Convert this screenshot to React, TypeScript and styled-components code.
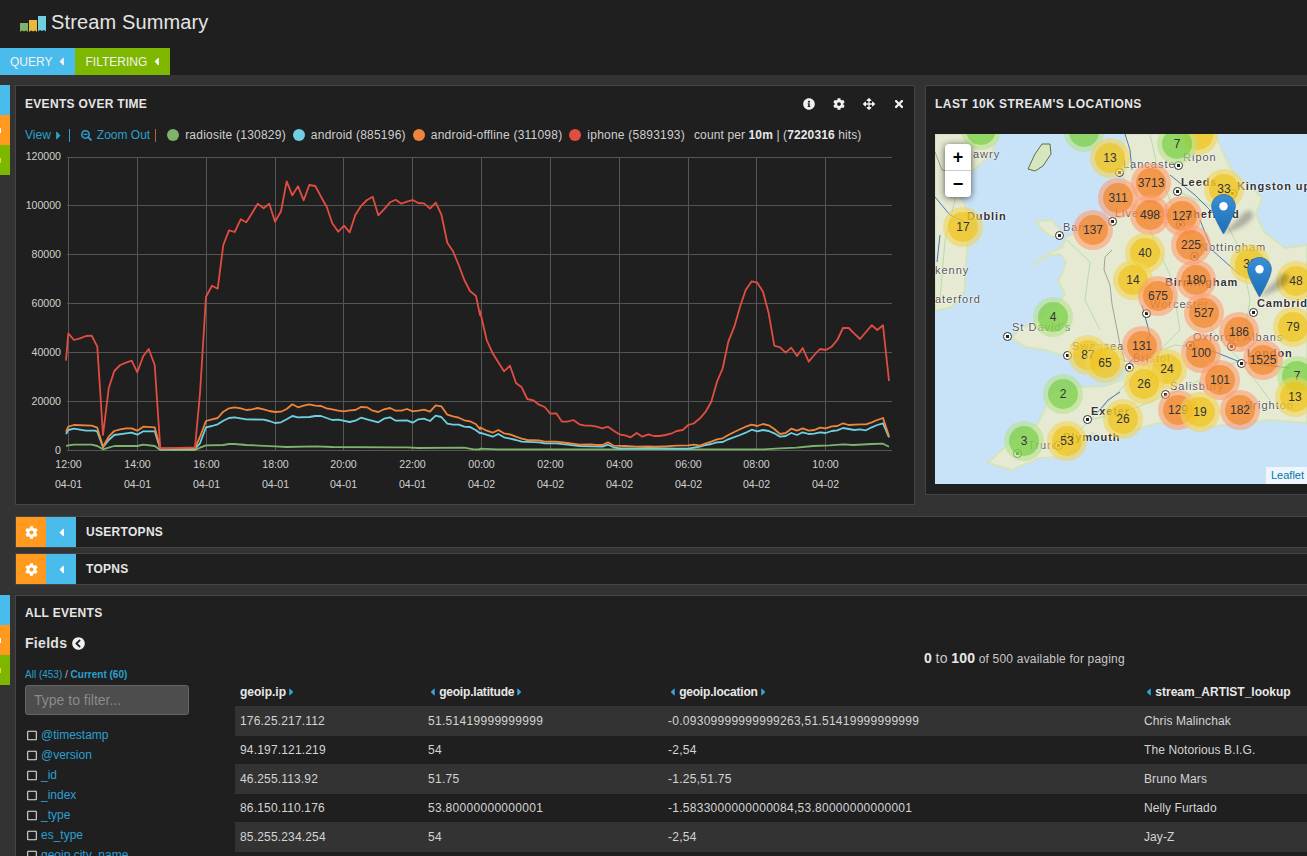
import styled, { createGlobalStyle } from "styled-components";
import {
  FaArrowsAlt,
  FaCaretLeft,
  FaCaretRight,
  FaChevronCircleLeft,
  FaCog,
  FaInfoCircle,
  FaRegSquare,
  FaSearchMinus,
  FaTimes,
} from "react-icons/fa";

export default function App() {
  return (
    <>
      <GlobalStyle />
      <Page>
        <TitleBar>
          <Logo />
          <Title>Stream Summary</Title>
        </TitleBar>
        <TabBar>
          <Tab $color={BLUE}>
            QUERY <FaCaretLeft />
          </Tab>
          <Tab $color={GREEN}>
            FILTERING <FaCaretLeft />
          </Tab>
        </TabBar>
        <Main>
          <Row>
            <RowTools />
            <ChartPanel>
              <PanelHeader>
                <PanelTitle>Events over time</PanelTitle>
                <PanelIcons>
                  <FaInfoCircle />
                  <FaCog />
                  <FaArrowsAlt />
                  <FaTimes />
                </PanelIcons>
              </PanelHeader>
              <Legend />
              <Chart />
            </ChartPanel>
            <MapPanel>
              <PanelHeader>
                <PanelTitle>Last 10k stream's locations</PanelTitle>
              </PanelHeader>
              <UkMap />
            </MapPanel>
          </Row>
          <CollapsedRow title="UserTopNs" />
          <CollapsedRow title="TopNs" />
          <EventsRow>
            <RowTools />
            <EventsPanel>
              <EventsHeader>
                <PanelTitle>All events</PanelTitle>
              </EventsHeader>
              <EventsBody>
                <FieldsColumn>
                  <FieldsTitle>
                    Fields <FaChevronCircleLeft />
                  </FieldsTitle>
                  <FieldCounts>
                    <a>All (453)</a> / <b>Current (60)</b>
                  </FieldCounts>
                  <FilterInput placeholder="Type to filter..." readOnly />
                  <FieldList>
                    {fields.map((name) => (
                      <FieldItem key={name}>
                        <FaRegSquare />
                        {name}
                      </FieldItem>
                    ))}
                  </FieldList>
                </FieldsColumn>
                <TableColumn>
                  <Paging>
                    <strong>0</strong> <Big>to</Big> <strong>100</strong> of 500
                    available for paging
                  </Paging>
                  <EventsTable>
                    <colgroup>
                      <col width={188} />
                      <col width={240} />
                      <col width={476} />
                      <col />
                    </colgroup>
                    <thead>
                      <tr>
                        <th>
                          geoip.ip <FaCaretRight />
                        </th>
                        <th>
                          <FaCaretLeft /> geoip.latitude <FaCaretRight />
                        </th>
                        <th>
                          <FaCaretLeft /> geoip.location <FaCaretRight />
                        </th>
                        <th>
                          <FaCaretLeft /> stream_ARTIST_lookup
                        </th>
                      </tr>
                    </thead>
                    <tbody>
                      {events.map((row) => (
                        <tr key={row[0]}>
                          {row.map((cell, i) => (
                            <td key={i}>{cell}</td>
                          ))}
                        </tr>
                      ))}
                    </tbody>
                  </EventsTable>
                </TableColumn>
              </EventsBody>
            </EventsPanel>
          </EventsRow>
        </Main>
      </Page>
    </>
  );
}

function Logo() {
  return (
    <LogoSvg viewBox="0 0 26 16">
      <path d="M0 7h8v9l-2-1.500-2 1-2-1-2 1.500z" fill="#7eb26d" />
      <path d="M9 4h8v12l-2-1.500-2 1-2-1-2 1.500z" fill="#eab839" />
      <path d="M18 0h8v15.500l-2-1.500-2 1-2-1-2 1.500z" fill="#6ed0e0" />
    </LogoSvg>
  );
}

function Legend() {
  return (
    <LegendRow>
      <LegendLink>
        View <ViewCaret />
      </LegendLink>
      <LegendBar $color="#2b9fd0" $before={8} />
      <LegendLink>
        <FaSearchMinus /> Zoom Out
      </LegendLink>
      <LegendBar $color="#b5623a" $before={5} />
      {legend.map((item) => (
        <LegendItem key={item.label}>
          <LegendDot $color={item.color} />
          {item.label}
        </LegendItem>
      ))}
      <LegendCount>
        count per <b>10m</b> | (<b>7220316</b> hits)
      </LegendCount>
    </LegendRow>
  );
}

function Chart() {
  return (
    <ChartSvg viewBox="15 147 900 348">
      {gridY.map((y) => (
        <line key={y} x1={67} x2={892} y1={y + 0.5} y2={y + 0.5} stroke="#555" />
      ))}
      {gridX.map((x) => (
        <line key={x} x1={x + 0.5} x2={x + 0.5} y1={157} y2={450} stroke="#555" />
      ))}
      {traces.map((trace) => (
        <polyline
          key={trace.color}
          points={toPoints(trace.left, trace.right)}
          fill="none"
          stroke={trace.color}
          strokeWidth={1.8}
          strokeLinejoin="round"
        />
      ))}
      {gridY.map((y, i) => (
        <TickText key={y} x={61} y={(i === 0 ? 156 : y) + 4} textAnchor="end">
          {(120000 - i * 20000).toString()}
        </TickText>
      ))}
      {gridX.map((x, i) => (
        <g key={x}>
          <TickText x={x + 0.5} y={468} textAnchor="middle">
            {ticks[i]}
          </TickText>
          <TickText x={x + 0.5} y={488} textAnchor="middle">
            {i < 6 ? "04-01" : "04-02"}
          </TickText>
        </g>
      ))}
    </ChartSvg>
  );
}

function UkMap() {
  return (
    <MapBox>
      <MapSvg viewBox="935 134 372 350">
        <g fill="#e6ead2" stroke="#d4e4c0" strokeWidth={2} strokeLinejoin="round">
          <polygon points="935,134 998,134 992,154 972,171 955,191 965,204 968,217 968,244 965,274 965,291 952,307 935,311" />
          <polygon points="1037,221 1052,220 1060,230 1058,238 1050,236 1040,228" />
          <polygon points="1125,134 1215,134 1222,150 1234,175 1250,186 1262,198 1256,214 1264,232 1285,248 1307,245 1307,423 1270,420 1240,423 1200,428 1158,423 1128,432 1112,440 1092,433 1078,446 1065,457 1040,458 1012,470 988,463 1005,447 1020,436 1038,423 1052,393 1082,387 1105,386 1122,380 1128,367 1110,360 1090,355 1068,357 1045,350 1025,347 1012,338 1020,328 1035,323 1048,312 1058,304 1065,294 1058,281 1062,274 1066,262 1060,254 1048,256 1032,265 1048,254 1062,247 1067,236 1090,230 1108,226 1118,205 1125,185 1122,165" />
        </g>
        <polygon
          points="1028,169 1035,154 1042,144 1050,144 1051,154 1043,166 1035,171"
          fill="#d8e6c0"
          stroke="#56724a"
        />
        <g fill="none" stroke="#b6dcae" strokeWidth={1}>
          <polyline points="1150,134 1158,170 1172,205 1190,240 1200,290 1212,330 1240,360" />
          <polyline points="1128,200 1150,230 1172,280 1180,330 1140,370 1100,410 1070,440" />
          <polyline points="1240,360 1270,400" />
          <polyline points="1240,360 1180,390 1130,410 1090,420" />
          <polyline points="1175,190 1220,210 1240,250 1250,300 1242,350" />
          <polyline points="1070,345 1130,362 1175,345 1215,350" />
          <polyline points="1067,240 1090,262 1085,300 1100,330" />
          <polyline points="960,180 945,240 940,300" />
        </g>
        <g fill="none" stroke="#4d78bb" strokeWidth={1}>
          <polyline points="1125,134 1130,150 1132,170" />
          <polyline points="1170,175 1195,195 1215,215 1225,225" />
          <polyline points="1142,305 1150,335 1128,365" />
          <polyline points="1120,392 1108,400 1098,412" />
          <polyline points="1185,345 1215,352 1240,362 1290,368" />
          <polyline points="935,197 950,215 965,222" />
          <polyline points="940,235 937,262" />
          <polyline points="1200,220 1212,250 1240,275" />
        </g>
        <g fill="none" stroke="#8f8f80" strokeWidth={0.8}>
          <polyline points="1112,250 1105,257 1104,270 1110,285 1112,304 1120,345 1125,362" />
          <polyline points="935,152 942,170 960,172" />
        </g>
      </MapSvg>

      {mapLabels.map((label) => (
        <MapLabel key={label.text} $x={label.x} $y={label.y} $bold={label.bold}>
          {label.text}
        </MapLabel>
      ))}
      {cityDots.map(([x, y]) => (
        <CityDot key={`${x}-${y}`} $x={x} $y={y} />
      ))}
      {clusters.map(([x, y, kind, count]) => (
        <Cluster key={`${x}-${y}`} $x={x} $y={y} $kind={kind}>
          <ClusterCore $kind={kind}>{count}</ClusterCore>
        </Cluster>
      ))}

      <MapPin x={1223} y={194} />
      <MapPin x={1259} y={257} />

      <ZoomControl>
        <ZoomButton>+</ZoomButton>
        <ZoomButton>−</ZoomButton>
      </ZoomControl>
      <Attribution>Leaflet</Attribution>
    </MapBox>
  );
}

function MapPin({ x, y }: { x: number; y: number }) {
  return (
    <PinSvg $x={x} $y={y} viewBox="0 0 45 41">
      <defs>
        <linearGradient id="pin-blue" x1="0" y1="0" x2="0" y2="1">
          <stop offset="0" stopColor="#3a8fd6" />
          <stop offset="1" stopColor="#1d6fb8" />
        </linearGradient>
      </defs>
      <PinShadow d="M12 40 L34 18 Q42 14 42 22 Q38 32 12 40z" />
      <path
        d="M12.500 0.500C6 0.500 0.700 5.800 0.700 12.300 0.700 20 12.500 40 12.500 40S24.300 20 24.300 12.300C24.300 5.800 19 0.500 12.500 0.500z"
        fill="url(#pin-blue)"
        stroke="#2a6ea8"
        strokeWidth={0.8}
      />
      <circle cx={12.5} cy={12.3} r={4.2} fill="#fff" />
    </PinSvg>
  );
}

function CollapsedRow({ title }: { title: string }) {
  return (
    <CollapsedPanel>
      <CollapsedButton $color={ORANGE}>
        <FaCog />
      </CollapsedButton>
      <CollapsedButton $color={BLUE}>
        <FaCaretLeft />
      </CollapsedButton>
      <CollapsedTitle>{title}</CollapsedTitle>
    </CollapsedPanel>
  );
}

function RowTools() {
  return (
    <ToolStrip>
      <ToolChip $color={BLUE} />
      <ToolChip $color={ORANGE} $mark="#fff" />
      <ToolChip $color={GREEN} $mark="#e8d24a" />
    </ToolStrip>
  );
}

const BLUE = "#4abcec";
const ORANGE = "#ff9a1e";
const GREEN = "#7eb700";
const PANEL = "#1f1f1f";
const BAND = "#333333";
const EDGE = "#454545";
const FONT = `"Liberation Sans", Arial, sans-serif`;

const GlobalStyle = createGlobalStyle`
  html, body {
    margin: 0;
    height: 100%;
    overflow: hidden;
    background: ${BAND};
    font-family: ${FONT};
    font-size: 12px;
    color: #c8c8c8;
  }
`;

const Page = styled.div`
  height: 856px;
  overflow: hidden;
`;

const TitleBar = styled.header`
  display: flex;
  align-items: center;
  height: 48px;
  padding: 0 0 4px 20px;
  box-sizing: border-box;
  background: ${PANEL};
`;

const LogoSvg = styled.svg`
  width: 26px;
  height: 16px;
  margin-top: 3px;
`;

const Title = styled.h1`
  margin: 0 0 0 5px;
  font-size: 20px;
  font-weight: 400;
  letter-spacing: 0.13px;
  color: #e4e4e4;
`;

const TabBar = styled.nav`
  display: flex;
  height: 27px;
  background: ${PANEL};
`;

const Tab = styled.div<{ $color: string }>`
  display: flex;
  align-items: center;
  gap: 7px;
  padding: 0 11px 0 10px;
  background: ${(p) => p.$color};
  color: #f2f2f2;
  font-size: 12px;

  svg {
    width: 5px;
    height: 13px;
  }
`;

const Main = styled.main`
  padding: 10px 0 0;
  background: ${BAND};
`;

const Row = styled.div`
  display: flex;
  align-items: flex-start;
  height: 421px;
`;

const EventsRow = styled(Row)`
  height: auto;
  margin-top: 10px;
`;

const ToolStrip = styled.div`
  flex: none;
  width: 10px;
  margin-right: 5px;
`;

const ToolChip = styled.div<{ $color: string; $mark?: string }>`
  position: relative;
  height: 30px;
  background: ${(p) => p.$color};

  &::after {
    content: "";
    display: ${(p) => (p.$mark ? "block" : "none")};
    position: absolute;
    left: 0;
    top: 13px;
    width: 1px;
    height: 5px;
    background: ${(p) => p.$mark};
  }
`;

const Panel = styled.section`
  box-sizing: border-box;
  background: ${PANEL};
  border: 1px solid ${EDGE};
`;

const ChartPanel = styled(Panel)`
  flex: none;
  width: 900px;
  height: 420px;
`;

const PanelTitle = styled.h2`
  margin: 0;
  font-size: 12px;
  font-weight: 700;
  text-transform: uppercase;
  color: #e6e6e6;
  letter-spacing: 0.3px;
`;

const MapPanel = styled(Panel)`
  flex: 1;
  height: 410px;
  margin: 0 -1px 0 10px;

  ${PanelTitle} {
    letter-spacing: 0.45px;
  }
`;

const EventsPanel = styled(Panel)`
  flex: 1;
  margin-right: -1px;
  height: 300px;
`;

const PanelHeader = styled.div`
  display: flex;
  align-items: center;
  justify-content: space-between;
  height: 36px;
  padding: 0 9px;
`;

const EventsHeader = styled(PanelHeader)`
  height: 33px;
`;

const PanelIcons = styled.div`
  display: flex;
  gap: 18px;
  color: #f0f0f0;

  svg {
    width: 12px;
    height: 12px;
  }
`;

const LegendRow = styled.div`
  display: flex;
  align-items: center;
  height: 16px;
  margin-top: 5px;
  padding-left: 9px;
  white-space: nowrap;
`;

const LegendLink = styled.span`
  display: flex;
  align-items: center;
  gap: 5px;
  color: #2b9fd0;

  svg {
    width: 11px;
    height: 11px;
  }
`;

const ViewCaret = styled(FaCaretRight)`
  && {
    width: 5px;
    height: 13px;
  }
`;

const LegendBar = styled.span<{ $color: string; $before: number }>`
  width: 1px;
  height: 13px;
  margin: 0 11px 0 ${(p) => p.$before}px;
  background: ${(p) => p.$color};
`;

const LegendItem = styled.span`
  display: flex;
  align-items: center;
  gap: 6px;
  margin-right: 7px;
  letter-spacing: 0.22px;
  color: #cfcfcf;
`;

const LegendDot = styled.i<{ $color: string }>`
  width: 12px;
  height: 12px;
  border-radius: 50%;
  background: ${(p) => p.$color};
`;

const LegendCount = styled.span`
  margin-left: 2px;
  letter-spacing: 0.12px;
  color: #cfcfcf;

  b {
    color: #e8e8e8;
  }
`;

const ChartSvg = styled.svg`
  display: block;
  width: 900px;
  height: 348px;
  margin: 4px 0 0 -1px;
`;

const TickText = styled.text`
  font-family: ${FONT};
  font-size: 10.6px;
  fill: #d0d0d0;
`;

const MapBox = styled.div`
  position: relative;
  height: 350px;
  margin: 12px 0 0 9px;
  overflow: hidden;
  background: #c8e2f8;
`;

const MapSvg = styled.svg`
  position: absolute;
  inset: 0;
  width: 372px;
  height: 350px;
`;

type AtPoint = { $x: number; $y: number };

const MapLabel = styled.span.attrs<AtPoint & { $bold?: boolean }>((p) => ({
  style: { left: p.$x - 935, top: p.$y - 134 - 7 },
}))<AtPoint & { $bold?: boolean }>`
  position: absolute;
  font-size: 11px;
  line-height: 14px;
  letter-spacing: ${(p) => (p.$bold ? 0.9 : 1)}px;
  font-weight: ${(p) => (p.$bold ? 700 : 400)};
  color: ${(p) => (p.$bold ? "#333" : "#555")};
  text-shadow: 0 0 2px #fff, 0 0 2px #fff;
  white-space: nowrap;
`;

const CityDot = styled.i.attrs<AtPoint>((p) => ({
  style: { left: p.$x - 935 - 4, top: p.$y - 134 - 4 },
}))<AtPoint>`
  position: absolute;
  box-sizing: border-box;
  width: 9px;
  height: 9px;
  border-radius: 50%;
  background: radial-gradient(circle, #222 0 1.5px, #fff 2px);
  border: 1px solid #333;
`;

type ClusterKind = "small" | "medium" | "large";

const haloColors: Record<ClusterKind, string> = {
  small: "rgba(181, 226, 140, 0.6)",
  medium: "rgba(241, 211, 87, 0.6)",
  large: "rgba(253, 156, 115, 0.6)",
};

const coreColors: Record<ClusterKind, string> = {
  small: "rgba(110, 204, 57, 0.6)",
  medium: "rgba(240, 194, 12, 0.6)",
  large: "rgba(241, 128, 23, 0.6)",
};

const Cluster = styled.div.attrs<AtPoint & { $kind: ClusterKind }>((p) => ({
  style: { left: p.$x - 935 - 20, top: p.$y - 134 - 20 },
}))<AtPoint & { $kind: ClusterKind }>`
  position: absolute;
  width: 40px;
  height: 40px;
  border-radius: 50%;
  background: ${(p) => haloColors[p.$kind]};
`;

const ClusterCore = styled.div<{ $kind: ClusterKind }>`
  width: 30px;
  height: 30px;
  margin: 5px;
  position: absolute;
  border-radius: 50%;
  background: ${(p) => coreColors[p.$kind]};
  color: #333;
  font-size: 12px;
  line-height: 30px;
  text-align: center;
`;

const PinSvg = styled.svg.attrs<AtPoint>((p) => ({
  style: { left: p.$x - 935 - 12.5, top: p.$y - 134 },
}))<AtPoint>`
  position: absolute;
  width: 45px;
  height: 41px;
`;

const PinShadow = styled.path`
  fill: rgba(0, 0, 0, 0.25);
  filter: blur(2px);
`;

const ZoomControl = styled.div`
  position: absolute;
  left: 10px;
  top: 10px;
  width: 26px;
  border-radius: 4px;
  background: #fff;
  box-shadow: 0 1px 7px rgba(0, 0, 0, 0.65);
`;

const ZoomButton = styled.div`
  height: 26px;
  color: #000;
  font: 700 18px/26px "Liberation Sans", Arial, sans-serif;
  text-align: center;

  & + & {
    border-top: 1px solid #ccc;
  }
`;

const Attribution = styled.a`
  position: absolute;
  right: 0;
  bottom: 0;
  padding: 2px 5px;
  width: 31px;
  background: rgba(255, 255, 255, 0.7);
  color: #0078a8;
  font-size: 11px;
  line-height: 13px;
`;

const CollapsedPanel = styled(Panel)`
  display: flex;
  align-items: stretch;
  height: 32px;
  margin: 0 -1px 5px 15px;

  &:first-of-type {
    margin-top: 10px;
  }
`;

const CollapsedButton = styled.div<{ $color: string }>`
  display: flex;
  align-items: center;
  justify-content: center;
  width: 30px;
  background: ${(p) => p.$color};
  color: #fff;

  svg {
    height: 13px;
    width: 13px;
  }
`;

const CollapsedTitle = styled.h3`
  align-self: center;
  margin: 0 0 0 10px;
  font-size: 12px;
  font-weight: 700;
  text-transform: uppercase;
  color: #e6e6e6;
  letter-spacing: 0.3px;
`;

const EventsBody = styled.div`
  display: flex;
`;

const FieldsColumn = styled.div`
  flex: none;
  width: 210px;
  padding: 0 0 0 9px;
`;

const FieldsTitle = styled.div`
  display: flex;
  align-items: center;
  gap: 5px;
  height: 20px;
  margin-top: 4px;
  font-size: 14px;
  font-weight: 700;
  letter-spacing: 0.3px;
  color: #e0e0e0;

  svg {
    width: 13px;
    height: 13px;
    color: #f0f0f0;
  }
`;

const FieldCounts = styled.div`
  margin-top: 16px;
  font-size: 10px;
  line-height: 12px;
  color: #bbb;

  a,
  b {
    color: #2b9fd0;
  }
`;

const FilterInput = styled.input`
  display: block;
  box-sizing: border-box;
  width: 164px;
  height: 30px;
  margin: 4px 0 0;
  padding: 0 8px;
  background: #4d4d4d;
  border: 1px solid #666;
  border-radius: 3px;
  font: 14px ${FONT};
  color: #ccc;

  &::placeholder {
    color: #8a8a8a;
  }
`;

const FieldList = styled.ul`
  margin: 10px 0 0;
  padding: 0 0 0 2px;
  list-style: none;
`;

const FieldItem = styled.li`
  display: flex;
  align-items: center;
  gap: 4px;
  height: 20px;
  color: #2b9fd0;

  svg {
    width: 10px;
    height: 11px;
    color: #e8e8e8;
  }
`;

const TableColumn = styled.div`
  flex: 1;
  min-width: 0;
`;

const Paging = styled.div`
  height: 49px;
  padding: 21px 0 0 689px;
  box-sizing: border-box;
  white-space: nowrap;
  line-height: 16px;
  letter-spacing: 0.2px;

  strong {
    font-size: 14px;
    color: #e8e8e8;
  }
`;

const Big = styled.span`
  font-size: 14px;
`;

const EventsTable = styled.table`
  width: 1072px;
  table-layout: fixed;
  border-collapse: collapse;
  white-space: nowrap;

  th {
    height: 28px;
    padding: 0 5px;
    box-sizing: border-box;
    text-align: left;
    font-size: 12px;
    font-weight: 700;
    color: #e8e8e8;
  }

  th:nth-child(2),
  th:nth-child(3) {
    letter-spacing: -0.2px;
  }

  th svg {
    width: 5px;
    height: 12px;
    color: #2fa8dc;
    vertical-align: -2px;
  }

  th svg:first-child:not(:last-child),
  th:last-child svg {
    margin: 0 1px 0 2px;
  }

  td {
    padding: 0 5px;
    color: #d4d4d4;
  }

  /* the numbers sit wider in the source, their digits are hinted to 7px */
  td:nth-child(1) {
    letter-spacing: 0.17px;
  }

  td:nth-child(2) {
    letter-spacing: 0.3px;
  }

  td:nth-child(3) {
    letter-spacing: 0.27px;
  }

  td:nth-child(4) {
    letter-spacing: 0.1px;
  }

  tbody tr:nth-child(odd) {
    height: 30px;
    background: #333;
  }

  tbody tr:nth-child(even) {
    height: 28px;
  }
`;

const legend = [
  { label: "radiosite (130829)", color: "#7eb26d" },
  { label: "android (885196)", color: "#6ed0e0" },
  { label: "android-offline (311098)", color: "#ef843c" },
  { label: "iphone (5893193)", color: "#e24d42" },
];

const fields = [
  "@timestamp",
  "@version",
  "_id",
  "_index",
  "_type",
  "es_type",
  "geoip.city_name",
  "geoip.country_code2",
];

const events = [
  ["176.25.217.112", "51.51419999999999", "-0.09309999999999263,51.51419999999999", "Chris Malinchak"],
  ["94.197.121.219", "54", "-2,54", "The Notorious B.I.G."],
  ["46.255.113.92", "51.75", "-1.25,51.75", "Bruno Mars"],
  ["86.150.110.176", "53.80000000000001", "-1.5833000000000084,53.80000000000001", "Nelly Furtado"],
  ["85.255.234.254", "54", "-2,54", "Jay-Z"],
];

const gridY = [157, 205, 254, 303, 352, 401, 450];
const gridX = [68, 137, 206, 275, 343, 412, 481, 550, 619, 688, 756, 825];
const ticks = ["12:00", "14:00", "16:00", "18:00", "20:00", "22:00", "00:00", "02:00", "04:00", "06:00", "08:00", "10:00"];

// traces were read off at 3x, the two halves meet at x = 480
const toPoints = (left: number[], right: number[]) => {
  const out: string[] = [];
  for (let i = 0; i < left.length; i += 2) {
    out.push(`${(60 + left[i] / 3).toFixed(1)},${(150 + left[i + 1] / 3).toFixed(1)}`);
  }
  for (let i = 0; i < right.length; i += 2) {
    out.push(`${(480 + right[i] / 3).toFixed(1)},${(150 + right[i + 1] / 3).toFixed(1)}`);
  }
  return out.join(" ");
};

const traces = [
  {
    color: "#7eb26d",
    left: [18,888,25,886,42,884,95,884,112,888,129,898,146,893,163,888,232,888,250,884,284,888,301,900,405,900,420,893,438,886,490,885,507,882,524,882,559,885,645,889,680,891,766,889,817,891,1000,892,1041,892,1075,894,1213,893,1240,898,1260,898],
    right: [0,896,50,898,850,898,900,895,950,893,1000,888,1050,886,1090,883,1120,885,1175,882,1209,881,1227,890],
  },
  {
    color: "#6ed0e0",
    left: [18,852,25,840,42,836,78,842,105,842,112,845,129,892,146,870,163,855,198,850,215,848,232,854,250,844,284,844,301,897,405,897,420,880,438,832,456,828,473,823,490,812,507,804,524,802,559,808,611,809,628,813,645,819,663,817,680,808,697,798,714,802,748,801,766,798,783,798,817,810,835,809,869,816,886,812,903,803,921,808,955,817,972,806,990,802,1007,812,1041,811,1058,818,1075,808,1092,806,1110,813,1127,797,1144,801,1162,821,1179,824,1196,824,1213,830,1230,831,1248,841,1260,850],
    right: [0,848,38,860,55,852,72,862,108,870,125,875,177,877,194,880,229,880,263,884,298,888,367,890,384,884,401,892,418,895,470,895,505,894,590,896,625,896,660,890,677,885,694,882,711,877,728,876,745,868,780,855,797,848,815,839,832,844,849,840,866,843,883,850,900,860,917,858,934,849,951,855,968,847,986,852,1003,851,1020,847,1037,849,1055,843,1072,841,1089,834,1106,837,1123,840,1140,838,1158,841,1175,832,1192,825,1209,820,1227,862],
  },
  {
    color: "#ef843c",
    left: [18,845,25,830,42,825,95,827,112,833,129,890,146,860,163,843,181,838,198,835,215,835,232,842,250,830,284,832,301,895,405,895,420,860,438,813,456,808,473,804,490,785,507,775,524,772,542,775,559,780,576,778,593,774,611,778,628,783,645,786,663,785,680,777,697,763,714,772,731,767,748,763,766,767,783,768,800,775,817,778,835,782,852,784,869,781,886,780,903,771,921,772,938,782,955,786,972,778,990,774,1007,782,1024,782,1041,777,1058,784,1075,782,1092,779,1110,785,1127,766,1144,769,1162,794,1179,799,1196,803,1213,811,1230,814,1248,823,1260,838],
    right: [0,832,20,842,38,848,55,840,72,850,90,853,108,860,125,866,142,870,177,871,194,875,229,875,263,879,298,884,332,883,350,885,367,885,384,877,401,887,435,888,470,890,505,889,522,890,556,889,590,887,625,886,642,884,660,887,677,880,694,875,711,868,728,865,745,855,763,846,780,838,797,830,815,824,832,828,849,822,866,826,883,837,900,852,917,849,934,836,951,842,968,835,986,842,1003,840,1020,833,1037,835,1055,829,1072,828,1089,820,1106,825,1140,823,1158,823,1175,817,1192,810,1209,804,1227,858],
  },
  {
    color: "#e24d42",
    left: [18,632,25,550,42,570,60,565,78,558,95,557,112,590,129,855,146,715,163,663,181,645,198,638,215,632,232,667,250,618,266,597,284,645,301,895,318,895,405,892,420,730,438,440,456,407,473,416,490,285,507,241,524,246,542,208,559,217,576,190,593,161,611,175,628,161,645,215,663,184,680,94,697,136,714,109,731,151,748,105,766,108,783,140,800,170,817,220,835,245,852,227,869,247,886,195,903,168,921,150,938,140,955,196,972,178,990,157,1007,149,1024,161,1041,155,1058,150,1075,159,1092,160,1110,176,1127,158,1144,193,1162,278,1179,304,1196,345,1213,390,1230,423,1248,438,1260,495],
    right: [0,483,20,570,38,610,55,637,72,664,90,647,108,699,125,712,142,747,160,751,177,764,194,771,211,791,229,790,246,815,263,815,280,810,298,823,315,827,332,827,350,830,367,835,384,830,401,842,418,853,435,856,452,862,470,849,487,860,505,853,522,858,539,858,556,855,573,851,590,843,608,840,625,825,642,820,660,805,677,785,694,755,711,695,728,655,745,575,763,530,780,470,797,420,815,394,832,398,849,425,866,490,883,587,900,592,917,608,934,593,951,618,968,594,986,635,1003,615,1020,597,1037,600,1055,590,1072,570,1089,534,1106,534,1123,551,1140,567,1158,546,1175,526,1192,540,1209,526,1227,693],
  },
];

const mapLabels: { text: string; x: number; y: number; bold?: boolean }[] = [
  { text: "awry", x: 973, y: 154 },
  { text: "Ripon", x: 1183, y: 157 },
  { text: "Lancaster", x: 1123, y: 164 },
  { text: "Leeds", x: 1181, y: 182, bold: true },
  { text: "Kingston upon Hull", x: 1237, y: 186, bold: true },
  { text: "Dublin", x: 967, y: 216, bold: true },
  { text: "Bangor", x: 1063, y: 227 },
  { text: "Liverpool", x: 1115, y: 213 },
  { text: "Sheffield", x: 1185, y: 214, bold: true },
  { text: "Nottingham", x: 1200, y: 247 },
  { text: "kenny", x: 935, y: 270 },
  { text: "Birmingham", x: 1165, y: 282, bold: true },
  { text: "aterford", x: 935, y: 299 },
  { text: "Cambridge", x: 1257, y: 303, bold: true },
  { text: "Worcester", x: 1150, y: 304 },
  { text: "St David's", x: 1012, y: 327 },
  { text: "Oxford", x: 1193, y: 337 },
  { text: "St Albans", x: 1228, y: 337 },
  { text: "Swansea", x: 1072, y: 346 },
  { text: "London", x: 1247, y: 353, bold: true },
  { text: "Bristol", x: 1133, y: 358 },
  { text: "Salisbury", x: 1170, y: 386 },
  { text: "Brighton", x: 1245, y: 405 },
  { text: "Exeter", x: 1091, y: 411, bold: true },
  { text: "Plymouth", x: 1063, y: 437, bold: true },
  { text: "Truro", x: 1028, y: 445 },
];

const cityDots: [number, number][] = [
  [1059, 235], [1112, 221], [1178, 165], [1177, 191], [1119, 172], [1180, 224], [1194, 256],
  [1232, 193], [1007, 336], [1067, 355], [1129, 367], [1146, 313], [1253, 312], [1165, 394],
  [1087, 419], [1241, 363], [1190, 345], [1231, 346], [1017, 453], [1058, 445],
];

const clusters: [number, number, ClusterKind, number | ""][] = [
  [981, 130, "small", ""],
  [1084, 132, "small", ""],
  [1198, 135, "medium", ""],
  [1177, 144, "small", 7],
  [1110, 158, "medium", 13],
  [1151, 183, "large", 3713],
  [1118, 198, "large", 311],
  [1224, 189, "medium", 33],
  [1150, 215, "large", 498],
  [1182, 216, "large", 127],
  [1093, 230, "large", 137],
  [963, 227, "medium", 17],
  [1145, 253, "medium", 40],
  [1191, 245, "large", 225],
  [1133, 280, "medium", 14],
  [1196, 280, "large", 180],
  [1250, 264, "medium", 33],
  [1296, 281, "medium", 48],
  [1158, 296, "large", 675],
  [1053, 317, "small", 4],
  [1204, 313, "large", 527],
  [1293, 327, "medium", 79],
  [1239, 332, "large", 186],
  [1142, 346, "large", 131],
  [1088, 355, "medium", 87],
  [1105, 363, "medium", 65],
  [1201, 353, "large", 100],
  [1263, 360, "large", 1525],
  [1167, 369, "medium", 24],
  [1297, 376, "small", 7],
  [1144, 384, "medium", 26],
  [1220, 380, "large", 101],
  [1295, 397, "medium", 13],
  [1063, 394, "small", 2],
  [1178, 410, "large", 129],
  [1200, 412, "medium", 19],
  [1240, 410, "large", 182],
  [1123, 419, "medium", 26],
  [1024, 441, "small", 3],
  [1067, 441, "medium", 53],
];
